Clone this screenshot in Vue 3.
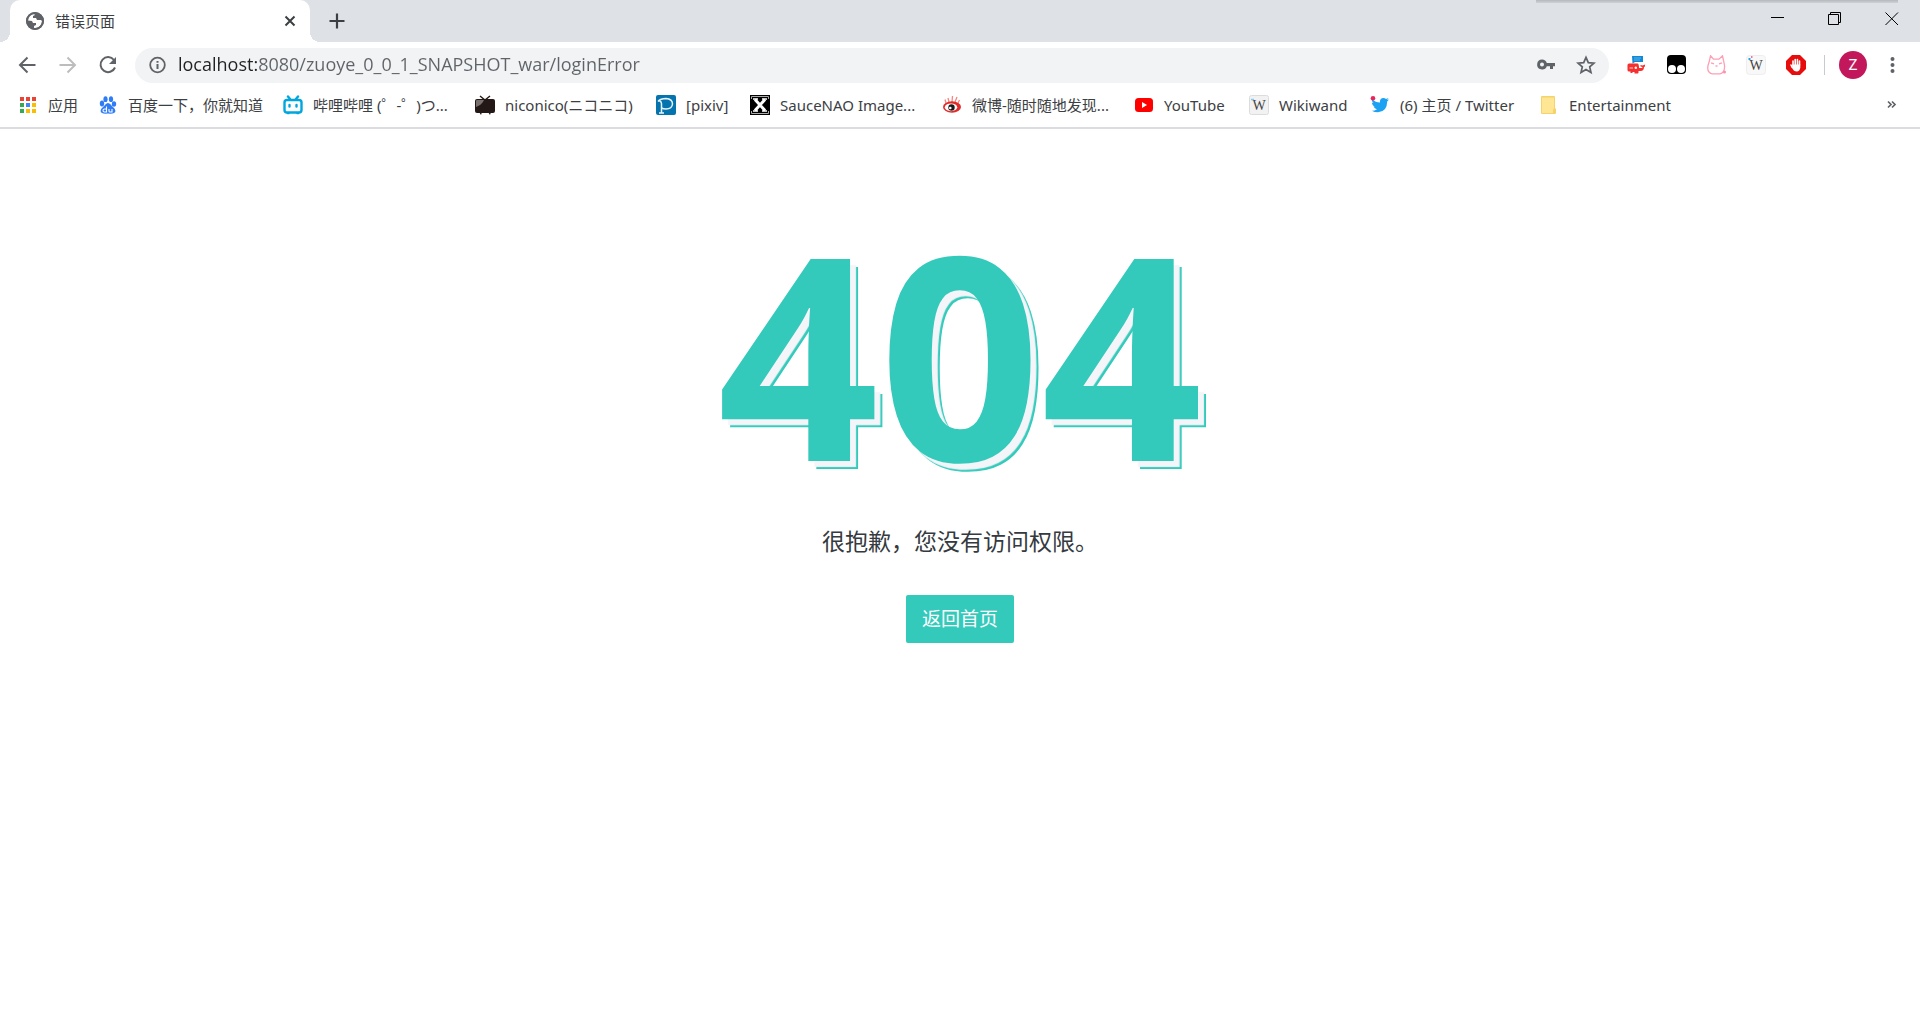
<script setup>
import { ref } from 'vue'

const address = ref('localhost:8080/zuoye_0_0_1_SNAPSHOT_war/loginError')

const bookmarks = [
  { icon: 'apps', label: '应用', width: 30 },
  { icon: 'baidu', label: '百度一下，你就知道', width: 135 },
  { icon: 'bilibili', label: '哔哩哔哩 (゜-゜)つ...', width: 142 },
  { icon: 'niconico', label: 'niconico(ニコニコ)', width: 131 },
  { icon: 'pixiv', label: '[pixiv]', width: 44 },
  { icon: 'saucenao', label: 'SauceNAO Image...', width: 142 },
  { icon: 'weibo', label: '微博-随时随地发现...', width: 142 },
  { icon: 'youtube', label: 'YouTube', width: 65 },
  { icon: 'wikiwand', label: 'Wikiwand', width: 71 },
  { icon: 'twitter', label: '(6) 主页 / Twitter', width: 119 },
  { icon: 'folder', label: 'Entertainment', width: 102 },
]

const appDots = ['#ea4335', '#ea4335', '#ea4335', '#34a853', '#4285f4', '#fbbc05', '#34a853', '#fbbc05', '#fbbc05']
</script>

<template>
  <div class="browser">
    <header class="chrome">
      <div class="tab-strip">
        <div class="tab">
          <svg class="i18" viewBox="0 0 18 18"><circle cx="9" cy="9" r="9" fill="#5f6368" /><path d="M8 2C4 2 1.800 5 2 8.500L6 9l1 2h3v2l-2 1v2c4 .5 8-2.500 8-7l-1-1h-4l-1-2H7V4l2-1z" fill="#fff" /><circle cx="9" cy="9" r="8" fill="none" stroke="#5f6368" stroke-width="2" /></svg>
          <span class="tab-title">错误页面</span>
          <button class="icon-button" aria-label="关闭标签页"><svg class="i18" viewBox="0 0 18 18"><path d="M4.500 4.500l9 9M13.500 4.500l-9 9" stroke="#3c4043" stroke-width="2" /></svg></button>
        </div>
        <button class="icon-button new-tab" aria-label="新标签页"><svg class="i18" viewBox="0 0 18 18"><path d="M9 1.500v15M1.500 9h15" stroke="#3c4043" stroke-width="2.200" /></svg></button>
        <div class="window-buttons">
          <button class="icon-button" aria-label="最小化"><svg class="i14" viewBox="0 0 14 14"><path d="M0 5.500h13" stroke="#000" /></svg></button>
          <button class="icon-button" aria-label="还原"><svg class="i14" viewBox="0 0 14 14"><path d="M.5 2.500h10v10H.5zM2.500 2.500v-2h10v10h-2" fill="none" stroke="#000" /></svg></button>
          <button class="icon-button" aria-label="关闭"><svg class="i14" viewBox="0 0 14 14"><path d="M.5 .5l12.500 12.500M13 .5L.5 13" stroke="#000" /></svg></button>
        </div>
        <div class="edge-shadow"></div>
      </div>

      <div class="toolbar">
        <nav class="nav-buttons">
          <button class="icon-button" aria-label="后退"><svg class="i20" viewBox="0 0 20 20"><path d="M17.500 10h-15M9.500 2.500L2 10l7.500 7.500" fill="none" stroke="#5f6368" stroke-width="2" /></svg></button>
          <button class="icon-button" aria-label="前进"><svg class="i20" viewBox="0 0 20 20"><path d="M1.500 10h15M9.500 2.500l7.500 7.500-7.500 7.500" fill="none" stroke="#bbbdbf" stroke-width="2" /></svg></button>
          <button class="icon-button" aria-label="重新加载"><svg class="i20" viewBox="0 0 20 20"><path d="M16 5A7.500 7.500 0 1 0 17 12.500" fill="none" stroke="#5f6368" stroke-width="2" /><path d="M18 2v7h-7z" fill="#5f6368" /></svg></button>
        </nav>
        <div class="omnibox">
          <svg class="i18" viewBox="0 0 18 18"><circle cx="9.500" cy="9" r="7.300" fill="none" stroke="#5f6368" stroke-width="1.800" /><path d="M9.500 8v5M9.500 5v1.800" stroke="#5f6368" stroke-width="2" /></svg>
          <input v-model="address" class="address" type="text" aria-label="地址" spellcheck="false" />
          <button class="icon-button" aria-label="密码"><svg class="i20" viewBox="0 0 20 20"><path d="M6 4.500a5 5 0 1 0 4.800 6.800H14v2.700h3v-2.700h2V8h-8.200A5 5 0 0 0 6 4.500zm0 3a2 2 0 1 1 0 4 2 2 0 0 1 0-4z" fill="#5f6368" fill-rule="evenodd" /></svg></button>
          <button class="icon-button" aria-label="添加书签"><svg class="i20" viewBox="0 0 20 20"><path d="M10 2.300l2.300 5.300 5.700.5-4.300 3.800 1.300 5.600-5-3-5 3 1.300-5.600L2 8.100l5.700-.5z" fill="none" stroke="#5f6368" stroke-width="1.700" /></svg></button>
        </div>
        <div class="extensions">
          <button class="icon-button" aria-label="翻译"><svg class="i20" viewBox="0 0 20 20"><path d="M6 1h11v6H9L6.500 8.500z" fill="#1289d6" /><path d="M8 3h7M8 5h6" stroke="#6fc0ea" stroke-width=".8" /><path d="M3 8.500h8.500q1.500 0 1.500 4.500h2.500q1 0 1-1l-2-.5v-1.500l2.200.5 2.300-1v2l-1 .5q0 4-3.500 4h-2v1.500q0 1-1 1h-3v-1.500H7l-1 1H4.500v-1.500H3q-1.500 0-1.500-1.500v-5Q1.500 8.500 3 8.500z" fill="#f5302e" /><path d="M3.500 13h3.500M9 12h1.500v1.500H9z" stroke="#fff" fill="#fff" stroke-width=".8" /></svg></button>
          <button class="icon-button" aria-label="脚本管理"><svg class="i20" viewBox="0 0 20 20"><rect x="1" width="19" height="19" rx="4" /><circle cx="6" cy="14" r="4" fill="#fff" /><circle cx="15" cy="14" r="4" fill="#fff" /></svg></button>
          <button class="icon-button" aria-label="猫"><svg class="i20" viewBox="0 0 20 20"><path d="M4.500 .8l3 3.400h5.500L16.500 .8l1.300 6q2 7.500-1 10.500-1.300 1.500-3 1.500H6.500q-2 0-3.300-1.500-3-3.300 0-10.500z" fill="none" stroke="#ff9eb5" stroke-width="1.300" /><path d="M5 7.800l3 1M16 7.800l-3 1M9.500 11h2" stroke="#ff9eb5" stroke-width="1.300" /><circle cx="18.500" cy="17" r="1.500" fill="#ff8faa" /></svg></button>
          <button class="icon-button" aria-label="Wikiwand"><svg class="i20" viewBox="0 0 20 20"><rect x=".5" y=".5" width="19" height="19" rx="3" fill="#f8f8f8" stroke="#eee" /><text x="10" y="15" text-anchor="middle" class="wiki-letter">W</text><path d="M2.500 4h2" stroke="#1ba8e8" stroke-width="2" /><path d="M5 2h1.500" stroke="#e94b87" stroke-width="1.500" /></svg></button>
          <button class="icon-button" aria-label="广告拦截"><svg class="i20" viewBox="0 0 20 20"><path d="M6 0h8l6 6v8l-6 6H6l-6-6V6z" fill="#e80d0d" /><path d="M7 10V6M9.200 10V4.500M11.400 10V4.500M13.500 10V6M6.200 12.500L5 10" stroke="#fff" stroke-width="1.600" stroke-linecap="round" /><path d="M6.200 9.500h8.100v3q-.5 4-3.600 4-3 0-4.500-3.500z" fill="#fff" /></svg></button>
        </div>
        <span class="divider"></span>
        <button class="avatar" aria-label="用户 Z">Z</button>
        <button class="icon-button menu" aria-label="菜单"><svg class="i20" viewBox="0 0 20 20"><g fill="#5f6368"><circle cx="10.500" cy="4" r="2" /><circle cx="10.500" cy="10" r="2" /><circle cx="10.500" cy="16" r="2" /></g></svg></button>
      </div>

      <nav class="bookmarks">
        <a v-for="item in bookmarks" :key="item.label" class="bookmark" href="#">
          <svg class="i20" viewBox="0 0 20 20">
            <template v-if="item.icon === 'apps'">
              <rect v-for="(color, n) in appDots" :key="n" :x="2 + (n % 3) * 6" :y="2 + Math.floor(n / 3) * 6" width="4" height="4" :fill="color" />
            </template>
            <g v-else-if="item.icon === 'baidu'" fill="#2e7cf6">
              <ellipse cx="4" cy="8.500" rx="2.200" ry="3" /><ellipse cx="7.500" cy="4.200" rx="2.100" ry="2.900" /><ellipse cx="13" cy="4.200" rx="2.100" ry="2.900" /><ellipse cx="16" cy="9" rx="2.200" ry="2.800" />
              <path d="M10 8q2 0 3.500 2.500l3 3q2 3-.5 4.500-2 1-6 .500-4 .5-6-.500-2.500-1.500-.5-4.500l3-3Q8 8 10 8z" />
              <path d="M8.500 11.500V17H6.500q-1.500 0-1.500-1.500t1.500-1.500h2M11 14v2q0 1 1 1h2v-3" fill="none" stroke="#fff" stroke-width="1.100" />
            </g>
            <g v-else-if="item.icon === 'bilibili'" fill="none" stroke="#00a7de" stroke-width="2.400" stroke-linecap="round">
              <rect x="1.500" y="5" width="17" height="12.500" rx="2.500" /><path d="M5 1.500L7 4M15 1.500L13 4M6.500 10v1.500M13.500 10v1.500" /><path d="M4.500 18.500h1.500M14 18.500h1.500" stroke-width="1.500" />
            </g>
            <g v-else-if="item.icon === 'niconico'">
              <path d="M5 1l5 4 5-4" fill="none" stroke="#231815" stroke-width="1.400" /><rect y="4" width="20" height="14" rx="2" fill="#231815" /><path d="M1 6q0-1 1-1h7q-2 5-8 7z" fill="#77706e" /><path d="M4 17h3l-1 3zM13 17h3l-1 3z" fill="#231815" />
            </g>
            <g v-else-if="item.icon === 'pixiv'">
              <rect width="20" height="20" rx="2" fill="#0574ae" /><path d="M2 6.500q2.500-3 8-3 6.500.500 6.500 5.500-.5 5-6.500 5-2.500 0-4.500-1M3 5.500q2.500 1 2.500 3V18M3 18h5" fill="none" stroke="#e9f4fa" stroke-width="1.500" />
            </g>
            <g v-else-if="item.icon === 'saucenao'">
              <rect width="20" height="20" /><path d="M1.500 4V1.500h17V4M1.500 16v2.500h17V16" fill="none" stroke="#aaa" /><path d="M5 4.500l10 11M15 4.500l-10 11" stroke="#fff" stroke-width="3" /><path d="M3 4h5M12 4h5M3 16h5M12 16h5" stroke="#fff" stroke-width="1.500" />
            </g>
            <g v-else-if="item.icon === 'weibo'">
              <path d="M4 8L3 4.500M7 7L6 3M10 7l.5-6M13 7l2-5M16 8l1.500-3" stroke="#f4877f" stroke-width="1.300" /><ellipse cx="10" cy="12" rx="9" ry="5.800" fill="#e02b2b" /><ellipse cx="9" cy="12.300" rx="6.200" ry="3.900" fill="#fff" /><circle cx="9.500" cy="12.500" r="3.200" fill="#1b1b1b" /><circle cx="8.300" cy="13" r="1.300" fill="#fff" />
            </g>
            <g v-else-if="item.icon === 'youtube'">
              <rect x="1" y="3" width="18" height="14" rx="3.500" fill="#f00" /><path d="M8 7v6l5-3z" fill="#fff" />
            </g>
            <g v-else-if="item.icon === 'wikiwand'">
              <rect x=".5" y=".5" width="19" height="19" rx="2" fill="#f2f2f2" stroke="#dcdcdc" /><text x="10" y="15" text-anchor="middle" class="wiki-letter">W</text><path d="M2 4.500h3" stroke="#7ccdf0" stroke-width="1.500" />
            </g>
            <g v-else-if="item.icon === 'twitter'">
              <path d="M2 4q3.500 3.500 8 3.500-.5-4.500 3.500-4.500 1.500 0 2.500 1l2.500-1-1.500 2 2-.5-1.800 2Q17 17 8 17.200q-4 0-6-1.500 3 0 5-1.500-2.500-.5-3.500-2.700h1.500Q2 10.500 2 7.500l1.500.5Q1 6 2 4z" fill="#1da1f2" /><circle cx="3" cy="3.200" r="2.300" fill="#e8265e" />
            </g>
            <g v-else>
              <path d="M3 1h12q1 0 1 1v11l1 1v4q0 1-1 1H3q-1 0-1-1V2q0-1 1-1z" fill="#f5d36b" /><path d="M3 2.500h12v10.500l-1 2V18H3z" fill="#ffe694" />
            </g>
          </svg>
          <span class="label" :style="{ minWidth: item.width + 'px' }">{{ item.label }}</span>
        </a>
        <button class="icon-button overflow" aria-label="更多书签"><svg class="i14" viewBox="0 0 14 14"><path d="M3 3.500l3 3-3 3M7 3.500l3 3-3 3" fill="none" stroke="#5f6368" stroke-width="1.700" /></svg></button>
      </nav>
    </header>

    <main class="page">
      <h1 class="code">404</h1>
      <p class="message">很抱歉，您没有访问权限。</p>
      <a class="home-link" href="#">返回首页</a>
    </main>
  </div>
</template>

<style>
body {
  background: #fff;
}
</style>

<style scoped>
.browser {
  font-family: "Noto Sans", "Noto Sans CJK SC", sans-serif;
  font-size: 15px;
  color: #3c4043;
}
.i14, .i18, .i20 {
  display: block;
  flex: none;
}
.i14 { width: 14px; height: 14px; }
.i18 { width: 18px; height: 18px; }
.i20 { width: 20px; height: 20px; }
.icon-button {
  flex: none;
  padding: 0;
  border: 0;
  background: none;
}
.chrome {
  border-bottom: 2px solid #dadce0;
}
.tab-strip {
  position: relative;
  display: flex;
  align-items: center;
  height: 42px;
  padding: 0 21px 0 10px;
  background: #dee1e6;
}
.tab {
  position: relative;
  display: flex;
  align-items: center;
  box-sizing: border-box;
  width: 300px;
  height: 42px;
  padding: 0 11px 0 16px;
  background: #fff;
  border-radius: 10px 10px 0 0;
}
.tab::before,
.tab::after {
  content: "";
  position: absolute;
  bottom: 0;
  width: 10px;
  height: 10px;
}
.tab::before {
  right: 100%;
  background: radial-gradient(circle at 0 0, #dee1e6 10px, #fff 10px);
}
.tab::after {
  left: 100%;
  background: radial-gradient(circle at 100% 0, #dee1e6 10px, #fff 10px);
}
.tab-title {
  flex: 1;
  margin-left: 11px;
  padding-bottom: 2px;
}
.new-tab {
  margin-left: 18px;
}
.window-buttons {
  display: flex;
  gap: 43px;
  margin-left: auto;
  padding-bottom: 5px;
}
.edge-shadow {
  position: absolute;
  top: 0;
  right: 22px;
  width: 362px;
  height: 3px;
  background: linear-gradient(#b4b7bb, #cfd2d7);
}
.toolbar {
  display: flex;
  align-items: center;
  height: 46px;
  padding: 0 18px;
}
.nav-buttons, .extensions {
  display: flex;
  gap: 20px;
}
.omnibox {
  display: flex;
  flex: 1;
  align-items: center;
  gap: 20px;
  height: 35px;
  margin: 0 17px;
  padding: 0 13px;
  background: #f1f3f4;
  border-radius: 18px;
}
.address {
  flex: 1;
  min-width: 0;
  margin-left: -8px;
  padding: 0 0 2px;
  border: 0;
  outline: 0;
  font: 18px "Open Sans", sans-serif;
  background: linear-gradient(to right, #202124 79px, #5f6368 79px);
  -webkit-background-clip: text;
  background-clip: text;
  -webkit-text-fill-color: transparent;
}
.divider {
  width: 1px;
  height: 20px;
  margin: 0 14px 0 18px;
  background: #c8cacd;
}
.avatar {
  width: 28px;
  height: 28px;
  padding: 0;
  border: 0;
  border-radius: 50%;
  background: #c2185b;
  color: #fff;
  font: 15px Roboto, sans-serif;
}
.menu {
  margin-left: 15px;
}
.wiki-letter {
  font: 14px "Liberation Serif", serif;
  fill: #444;
}
.bookmarks {
  display: flex;
  align-items: center;
  gap: 20px;
  height: 34px;
  padding: 0 21px 5px 18px;
}
.bookmark {
  display: flex;
  align-items: center;
  gap: 10px;
  color: inherit;
  text-decoration: none;
  white-space: nowrap;
}
.label {
  line-height: 22px;
}
.overflow {
  margin-left: auto;
}
.page {
  display: flex;
  flex-direction: column;
  align-items: center;
  padding: 83px 20px;
}
.code {
  margin: 0;
  font: bold 283px/280px "Open Sans", sans-serif;
  color: #33cabb;
  text-shadow: 6px 6px 1px #f4f5f9, 8px 8px 0 #33cabb;
}
.message {
  margin: 31px 0 36px;
  font-size: 23px;
  line-height: 36px;
  color: #343a40;
}
.home-link {
  padding: 0 16px;
  border-radius: 2px;
  background: #33cabb;
  color: #fff;
  font-size: 19px;
  line-height: 48px;
  text-decoration: none;
}
</style>
